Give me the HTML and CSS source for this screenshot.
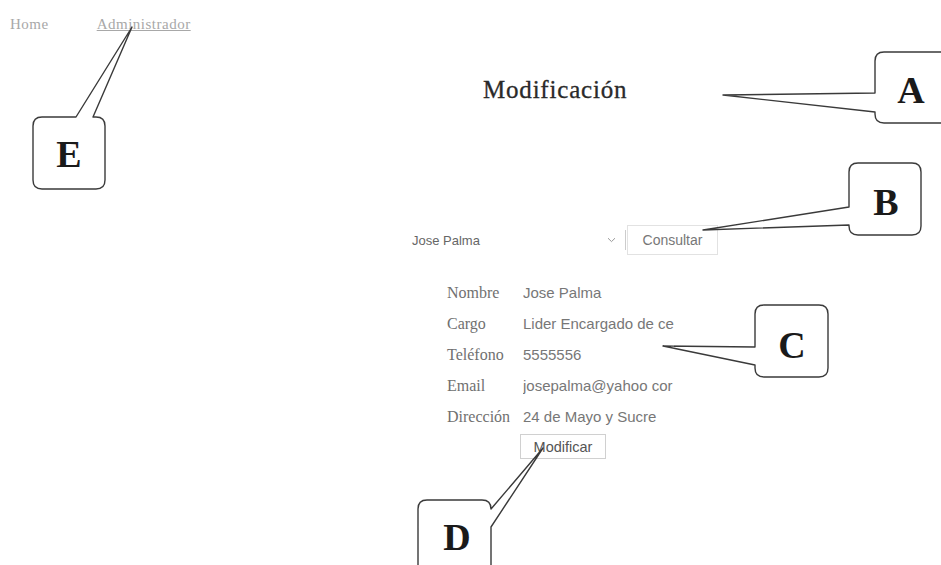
FILE: index.html
```html
<!DOCTYPE html>
<html lang="es">
<head>
    <meta charset="UTF-8">
    <meta name="viewport" content="width=device-width, initial-scale=1.0">
    <title>Modificación</title>
    <link rel="stylesheet" href="styles.css">
</head>
<body>
    <nav class="topnav">
        <a class="nav-link" href="#">Home</a>
        <a class="nav-link nav-current" href="#">Administrador</a>
    </nav>

    <div class="panel">
        <h1 class="title">Modificación</h1>

        <div class="search-row">
            <div class="picker">
                <span class="picker-value">Jose Palma</span>
                <svg class="picker-arrow" width="9" height="6" viewBox="0 0 9 6"><path d="M1 1.2 L4.5 4.6 L8 1.2" fill="none" stroke="#999" stroke-width="1"/></svg>
            </div>
            <button class="btn btn-search">Consultar</button>
        </div>

        <div class="fields">
            <label class="field-label">Nombre</label>
            <input class="field-input" type="text" value="Jose Palma">
            <label class="field-label">Cargo</label>
            <input class="field-input" type="text" value="Lider Encargado de ce">
            <label class="field-label">Teléfono</label>
            <input class="field-input" type="text" value="5555556">
            <label class="field-label">Email</label>
            <input class="field-input" type="text" value="josepalma@yahoo cor">
            <label class="field-label">Dirección</label>
            <input class="field-input" type="text" value="24 de Mayo y Sucre">
        </div>

        <button class="btn btn-save">Modificar</button>
    </div>

    <!-- callouts drawn over the screenshot -->
    <svg class="callouts" width="941" height="565" viewBox="0 0 941 565">
        <g fill="#fff" stroke="#3a3a3a" stroke-width="1.4" stroke-linejoin="round">
            <path d="M950 52 H884 Q875 52 875 61 V93 L723 95 L875 112 V114 Q875 123 884 123 H950"/>
            <path d="M858 163 H912 Q921 163 921 172 V226 Q921 235 912 235 H858 Q849 235 849 226 V225 L703 230 L849 207 V172 Q849 163 858 163 Z"/>
            <path d="M764 305 H819 Q828 305 828 314 V368 Q828 377 819 377 H764 Q755 377 755 368 V365 L663 346 L755 347 V314 Q755 305 764 305 Z"/>
            <path d="M427 500 H482 Q491 500 491 509 L543 448 L491 527 V580 H418 V509 Q418 500 427 500 Z"/>
            <path d="M42 117 H76 L132 27 L93 117 H96 Q105 117 105 126 V180 Q105 189 96 189 H42 Q33 189 33 180 V126 Q33 117 42 117 Z"/>
        </g>
        <g class="callout-letter" text-anchor="middle">
            <text x="911" y="103">A</text>
            <text x="886" y="215">B</text>
            <text x="792" y="358">C</text>
            <text x="457" y="550">D</text>
            <text x="69" y="167">E</text>
        </g>
    </svg>
</body>
</html>
```

FILE: styles.css
```css
body {
    margin: 0;
    background-color: #fff;
    font-family: "Liberation Serif", serif;
    position: relative;
    width: 941px;
    height: 565px;
    overflow: hidden;
}

.topnav {
    display: flex;
    gap: 48px;
    padding: 16px 0 0 10px;
    height: 16px;
    font-size: 15px;
    line-height: 16px;
    letter-spacing: 0.5px;
}
.nav-link {
    color: #a8a8a8;
    text-decoration: none;
}
.nav-current {
    text-decoration: underline;
}

.panel {
    margin-left: 410px;
    width: 320px;
}

.title {
    margin: 44px 0 0 73px;
    font-size: 25px;
    line-height: 28px;
    font-weight: normal;
    letter-spacing: 0.8px;
    color: #2a2a2a;
    -webkit-text-stroke: 0.3px #2a2a2a;
}

.search-row {
    display: flex;
    align-items: center;
    margin: 121px 0 0 2px;
    height: 30px;
}
.picker {
    display: flex;
    align-items: center;
    width: 213px;
    height: 20px;
    border-right: 1px solid #ccc;
    font-family: "Liberation Sans", sans-serif;
    font-size: 13px;
    color: #666;
}
.picker-value {
    flex: 1;
}
.picker-arrow {
    margin-right: 9px;
}

.btn {
    font-family: "Liberation Sans", sans-serif;
    background-color: #fff;
    border: 1px solid #e2e2e2;
    color: #777;
    padding: 0;
    cursor: pointer;
}
.btn-search {
    width: 91px;
    height: 30px;
    margin-left: 1px;
    font-size: 14px;
}
.btn-save {
    display: block;
    width: 86px;
    height: 25px;
    margin: 2px 0 0 110px;
    font-size: 14.5px;
    color: #555;
    border-color: #d0d0d0;
}

.fields {
    display: grid;
    grid-template-columns: 74px 158px;
    grid-auto-rows: 31px;
    align-items: center;
    margin: 22px 0 0 37px;
}
.field-label {
    font-size: 16px;
    color: #707070;
}
.field-input {
    border: none;
    padding: 0 2px;
    width: 156px;
    font-family: "Liberation Sans", sans-serif;
    font-size: 15px;
    color: #777;
    background: transparent;
    outline: none;
}

.callouts {
    position: absolute;
    top: 0;
    left: 0;
    pointer-events: none;
}
.callout-letter {
    font-family: "Liberation Serif", serif;
    font-weight: bold;
    font-size: 38px;
    fill: #1a1a1a;
}
```
